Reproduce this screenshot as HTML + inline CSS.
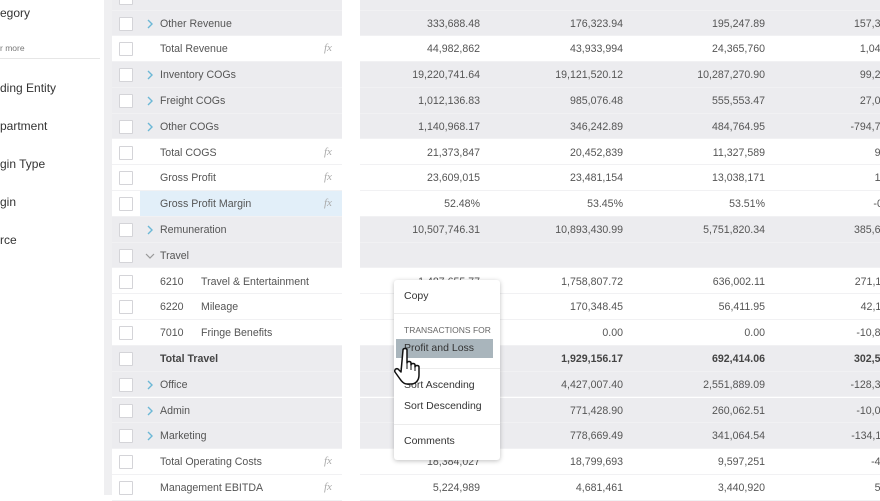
<!DOCTYPE html>
<html><head><meta charset="utf-8"><style>
*{margin:0;padding:0;box-sizing:border-box}
body{width:880px;height:495px;overflow:hidden;background:#fff;font-family:"Liberation Sans",sans-serif;color:#555;position:relative}
.sb{position:absolute;left:0;font-size:12px;color:#333}
.strip{position:absolute;left:104px;top:0;width:8px;height:495px;background:#efeff1}
.row{position:absolute;left:112px;width:768px;height:25.8px;font-size:10.6px}
.row .lp{position:absolute;left:0;width:230px;height:100%;border-bottom:1px solid #f1f1f3}
.row .np{position:absolute;left:248px;width:520px;height:100%;border-bottom:1px solid #f1f1f3}
.g .lp,.g .np{background:#ececef}
.hl .lp{background:linear-gradient(90deg,#fff 28px,#e2eff9 28px)}
.cb{position:absolute;left:7px;top:6px;width:14px;height:14px;border:1px solid #d4d4d8;background:#fff;border-radius:1px}
.lb{position:absolute;left:48px;top:7px;white-space:nowrap}
.ar{position:absolute;left:35px;top:8px}
.fx{position:absolute;left:212px;top:6px;font-family:"Liberation Serif",serif;font-style:italic;color:#aaa;font-size:11px}
.v{position:absolute;top:7px;text-align:right;width:140px;white-space:nowrap}
.b{font-weight:bold;color:#444}
.menu{position:absolute;left:394px;top:280px;width:106px;height:180px;background:#fff;border-radius:3px;box-shadow:0 1px 5px rgba(0,0,0,.25);font-size:10.5px;color:#333}
.menu div{position:absolute;left:10px;white-space:nowrap}
.menu hr{position:absolute;left:0;width:106px;border:0;border-top:1px solid #ececec}
</style></head><body>
<div class="sb" style="top:6px">egory</div>
<div class="sb" style="top:43px;font-size:8.5px;color:#777">r more</div>
<div style="position:absolute;left:0;top:58px;width:100px;border-top:1px solid #e6e6e6"></div>
<div class="sb" style="top:81px">ding Entity</div>
<div class="sb" style="top:119px">partment</div>
<div class="sb" style="top:157px">gin Type</div>
<div class="sb" style="top:195px">gin</div>
<div class="sb" style="top:233px">rce</div>
<div class="strip"></div>
<div id="t"></div>
<script>
var R=[
["g","Other Revenue",1,0,["333,688.48","176,323.94","195,247.89","157,366.20"]],
["","Total Revenue",0,1,["44,982,862","43,933,994","24,365,760","1,046,123"]],
["g","Inventory COGs",1,0,["19,220,741.64","19,121,520.12","10,287,270.90","99,267.12"]],
["g","Freight COGs",1,0,["1,012,136.83","985,076.48","555,553.47","27,016.45"]],
["g","Other COGs",1,0,["1,140,968.17","346,242.89","484,764.95","-794,712.10"]],
["","Total COGS",0,1,["21,373,847","20,452,839","11,327,589","92,173"]],
["","Gross Profit",0,1,["23,609,015","23,481,154","13,038,171","12,873"]],
["hl","Gross Profit Margin",0,1,["52.48%","53.45%","53.51%","-0.12%"]],
["g","Remuneration",1,0,["10,507,746.31","10,893,430.99","5,751,820.34","385,612.30"]],
["g","Travel",2,0,["","","",""]],
["","6210|Travel & Entertainment",0,0,["1,487,655.77","1,758,807.72","636,002.11","271,112.40"]],
["","6220|Mileage",0,0,["","170,348.45","56,411.95","42,112.30"]],
["","7010|Fringe Benefits",0,0,["","0.00","0.00","-10,812.10"]],
["g","<b class=b>Total Travel</b>",0,0,["","<b class=b>1,929,156.17</b>","<b class=b>692,414.06</b>","<b class=b>302,512.10</b>"]],
["g","Office",1,0,["","4,427,007.40","2,551,889.09","-128,312.10"]],
["g","Admin",1,0,["","771,428.90","260,062.51","-10,012.10"]],
["g","Marketing",1,0,["","778,669.49","341,064.54","-134,112.10"]],
["","Total Operating Costs",0,1,["18,384,027","18,799,693","9,597,251","-41,236"]],
["","Management EBITDA",0,1,["5,224,989","4,681,461","3,440,920","54,823"]]];
var h='';
h+='<div class="row g" style="top:-15.3px"><div class="lp"><div class="cb"></div></div><div class="np"></div></div>';
R.forEach(function(r,i){
var top=10.5+25.8*i;
var lbl=r[1];
if(lbl.indexOf('|')>0){var p=lbl.split('|');lbl='<span style="position:absolute;left:0">'+p[0]+'</span><span style="position:absolute;left:41px">'+p[1]+'</span>';}
h+='<div class="row '+r[0]+'" style="top:'+top+'px"><div class="lp"><div class="cb"></div>'+
(r[2]==1?'<svg class="ar" width="6" height="10" viewBox="0 0 6 10"><path d="M1 1l4 4-4 4" fill="none" stroke="#6cb8d6" stroke-width="1.4"/></svg>':'')+
(r[2]==2?'<svg class="ar" style="left:33px;top:10px" width="10" height="6" viewBox="0 0 10 6"><path d="M1 1l4 4 4-4" fill="none" stroke="#999" stroke-width="1.2"/></svg>':'')+
'<span class="lb">'+lbl+'</span>'+(r[3]?'<span class="fx">fx</span>':'')+'</div><div class="np">';
var xs=[-20,123,265,407];
r[4].forEach(function(v,j){h+='<span class="v" style="left:'+xs[j]+'px">'+v+'</span>';});
h+='</div></div>';});
document.getElementById('t').innerHTML=h;
</script>
<div class="menu">
<div style="top:10px">Copy</div>
<hr style="top:33px">
<div style="top:45px;font-size:8.5px;color:#666">TRANSACTIONS FOR</div>
<span style="position:absolute;left:2px;top:59px;width:97px;height:19px;background:#a9b5bc"></span>
<div style="top:62px">Profit and Loss</div>
<hr style="top:88px">
<div style="top:99px">Sort Ascending</div>
<div style="top:120px">Sort Descending</div>
<hr style="top:144px">
<div style="top:155px">Comments</div>
</div>
<svg style="position:absolute;left:393px;top:347px" width="30" height="40" viewBox="0 0 30 40">
<path d="M10 3c0-2 4-2 4 0v13c0-2 4-2 4 0v2c0-2 4-2 4 0v2c0-2 4-2 4 0v8c0 5-3 9-8 9h-4c-3 0-5-2-7-5l-5-7c-1-2 1-4 3-3l3 3z" fill="#fff" stroke="#111" stroke-width="1.5" stroke-linejoin="round"/>
<path d="M14 16v6M18 18v5M22 20v4" stroke="#111" stroke-width="1"/>
</svg>
</body></html>
